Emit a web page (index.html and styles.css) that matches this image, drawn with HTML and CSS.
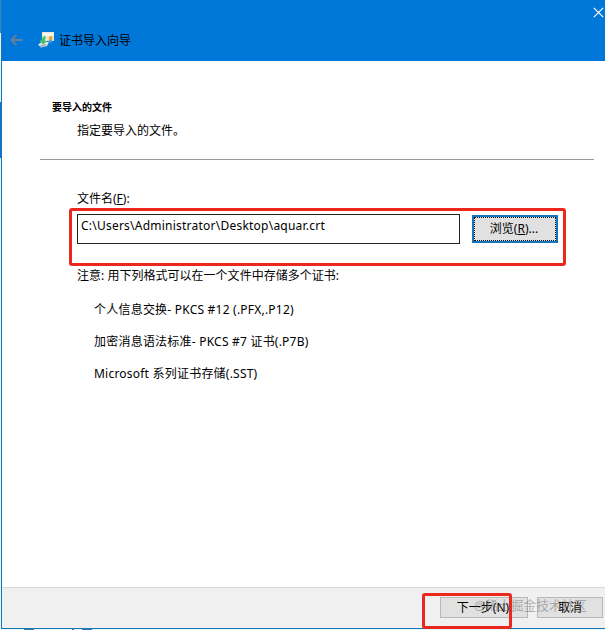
FILE: index.html
```
<!DOCTYPE html>
<html lang="zh-CN">
<head>
<meta charset="utf-8">
<title>证书导入向导</title>
<link rel="stylesheet" href="styles.css">
</head>
<body>
<div class="desktop">
  <div class="edge"><i class="edge-top"></i><i class="edge-gap"></i><i class="edge-blue"></i></div>
  <main class="window">
    <header class="titlebar">
      <svg class="back" width="14" height="12" viewBox="0 0 14 12"><path d="M12.500 6H1.500M6.200 1.300 1.500 6l4.700 4.700" fill="none" stroke="#66809a" stroke-width="2"/></svg>
      <svg class="wizard-icon" width="17" height="17" viewBox="0 0 17 17">
        <path d="M4 1h12v9H4z" fill="#e9e8d8"/>
        <path d="M5 2h10v3H5z" fill="#f7f6ec"/>
        <path d="M11 7h3v5l-1.500-1-1.500 1z" fill="#5b9be0"/>
        <circle cx="12.700" cy="7" r="1.900" fill="#efa52c"/>
        <path d="M0 13.500 4 11h7l-2 4-6 1.500z" fill="#dce3e4"/>
        <path d="M2 14.500 8.500 13l-1.500 2-4 1z" fill="#9cabb0"/>
        <path d="M7 5c-3 1-3 3-3 5H2l3 3.500L9 10H7c0-2 0-3 1-4z" fill="#3fbd52" stroke="#91dc94" stroke-width=".5"/>
      </svg>
      <h1 class="title">证书导入向导</h1>
      <svg class="close" width="11" height="11" viewBox="0 0 11 11"><path d="m.8.8 9.400 9.400m0-9.400L.8 10.200" fill="none" stroke="#fff" stroke-width="1.200"/></svg>
    </header>
    <section class="heading">
      <h2>要导入的文件</h2>
      <p>指定要导入的文件。</p>
    </section>
    <section class="content">
      <label class="label" for="file">文件名(<u>F</u>):</label>
      <div class="file-row">
        <div class="field" id="file"><span class="path">C:\Users\Administrator\Desktop\aquar.crt</span></div>
        <button class="browse"><span>浏览(<u>R</u>)...</span></button>
        <i class="mark mark-file"></i>
      </div>
      <p class="note">注意: 用下列格式可以在一个文件中存储多个证书:</p>
      <ul class="formats">
        <li>个人信息交换- PKCS #12 (.PFX,.P12)</li>
        <li>加密消息语法标准- PKCS #7 证书(.P7B)</li>
        <li>Microsoft 系列证书存储(.SST)</li>
      </ul>
    </section>
    <footer class="footer">
      <button class="next">下一步(N)</button>
      <button class="cancel">取消</button>
      <span class="watermark">@稀土掘金技术社区</span>
      <i class="mark mark-next"></i>
    </footer>
  </main>
  <div class="below"><i class="b1"></i><i class="b2"></i><i class="b3"></i></div>
</div>
</body>
</html>
```
FILE: styles.css
```
* { box-sizing: border-box; }
body, h1, h2, p, ul { margin: 0; padding: 0; }
body { overflow: hidden; background: #fff; color: #000; font: 12px/18px "Noto Sans", "Noto Sans CJK SC", sans-serif; white-space: nowrap; }
h1, h2 { font-size: 12px; font-weight: 400; }
i { display: block; }
svg { display: block; flex: none; }
u { text-underline-offset: 1px; text-decoration-thickness: 1px; }
button { font: inherit; color: inherit; padding: 0; border-radius: 0; white-space: nowrap; }
.desktop { display: grid; grid-template: 629px 1px / 1px 604px; width: 605px; height: 630px; background: #e0f8fd; }
.edge-top { height: 33px; background: #2789d6; }
.edge-gap { height: 69px; }
.edge-blue { height: 56px; background: #1769d8; }
.window { display: flex; flex-direction: column; border-left: 1px solid #1878b4; border-bottom: 1px solid #1878b4; background: #fff; }
.titlebar { position: relative; display: flex; flex: none; height: 61px; padding: 32px 0 0 8px; background: #0078d9; }
.back { margin-top: 2px; }
.wizard-icon { margin: -1px 0 0 14px; }
.title { margin: 0 0 0 4px; }
.close { position: absolute; left: 591px; top: 7px; }
.heading { height: 99px; margin: 0 11px 0 38px; padding: 38px 0 0 12px; border-bottom: 1px solid #999; }
.heading h2 { font-size: 10px; font-weight: 700; line-height: 16px; }
.heading p { margin: 7px 0 0 25px; }
.content { flex: 1; padding: 30px 0 0 75px; }
.label { display: block; height: 24px; }
.file-row { position: relative; display: flex; gap: 12px; }
.field { width: 383px; height: 30px; padding: 2px 3px; border: 1px solid #222; }
.path { letter-spacing: .23px; }
.browse { width: 86px; height: 28px; margin-top: 1px; border: 2px solid #1676bd; background: #e1e1e1; }
.browse span { display: block; height: 24px; padding-right: 2px; line-height: 22px; border: 1px dotted #111; }
.mark { position: absolute; border: 3px solid #ec281e; border-radius: 3px; }
.mark-file { left: -8px; top: -6px; width: 497px; height: 58px; }
.note { margin-top: 23px; letter-spacing: .02px; }
.formats { list-style: none; margin: 16px 0 0 17px; letter-spacing: .22px; }
.formats li { height: 32px; }
.footer { position: relative; display: flex; flex: none; gap: 9px; height: 41px; padding: 9px 0 0 438px; border-top: 1px solid #d9d9d9; background: #f0f0f0; }
.footer button { height: 21px; line-height: 19px; border: 1px solid #b8b8b8; background: #e1e1e1; }
.footer .next { width: 88px; padding-right: 2px; }
.footer .cancel { width: 66px; }
.watermark { position: absolute; left: 472px; top: 8px; color: rgba(110,110,110,.5); font-size: 12.700px; line-height: 18px; }
.mark-next { left: 420px; top: 5px; width: 90px; height: 36px; }
.below { grid-column: 1 / 3; display: flex; gap: 8px; padding-left: 24px; }
.b1, .b2, .b3 { height: 1px; background: #367bae; }
.b1 { width: 10px; margin-right: 30px; }
.b2 { width: 2px; }
.b3 { width: 10px; }
```
